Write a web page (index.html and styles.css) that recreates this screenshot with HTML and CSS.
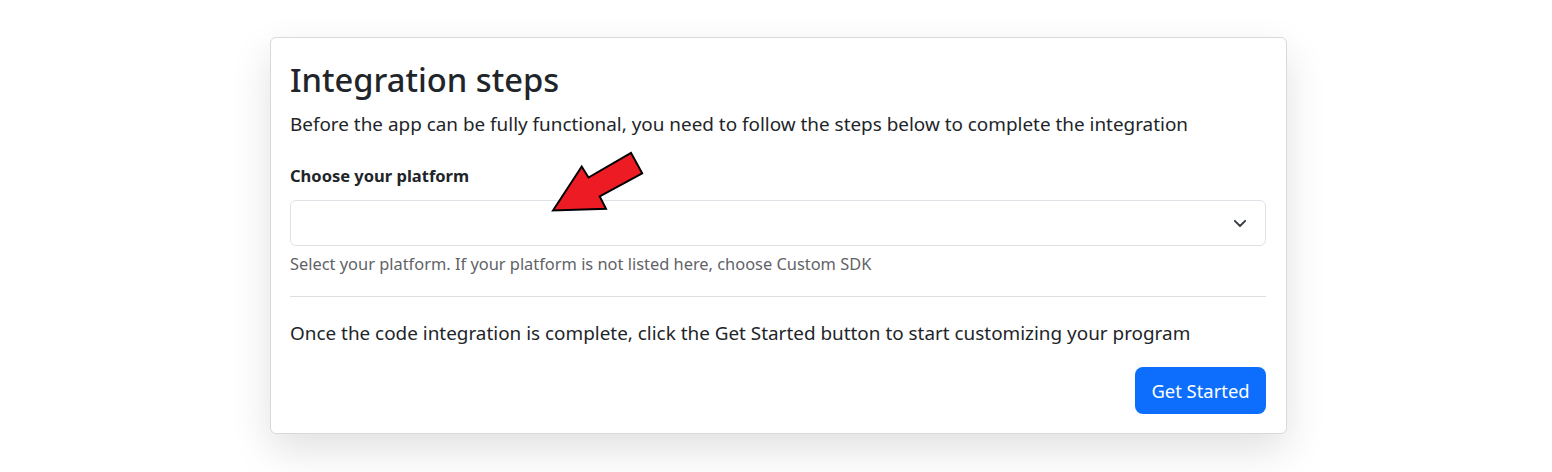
FILE: index.html
```html
<!DOCTYPE html>
<html lang="en">
<head>
<meta charset="utf-8">
<title>Integration steps</title>
<link rel="stylesheet" href="styles.css">
</head>
<body>
<main class="page">
  <section class="card">
    <h1 class="title">Integration steps</h1>
    <p class="lead">Before the app can be fully functional, you need to follow the steps below to complete the integration</p>
    <label class="label">Choose your platform</label>
    <div class="select">
      <svg class="chevron" width="12" height="7" viewBox="0 0 12 7" aria-hidden="true"><path d="M0.8 0.8 L6 6 L11.2 0.8" fill="none" stroke="#343a40" stroke-width="1.8" stroke-linecap="round" stroke-linejoin="round"/></svg>
    </div>
    <div class="help">Select your platform. If your platform is not listed here, choose Custom SDK</div>
    <hr class="divider">
    <p class="lead lead-2">Once the code integration is complete, click the Get Started button to start customizing your program</p>
    <div class="actions">
      <button class="btn" type="button">Get Started</button>
    </div>
  </section>
  <svg class="arrow" width="1552" height="472" viewBox="0 0 1552 472" aria-hidden="true">
    <polygon points="553,210.5 581.7,166.5 588.5,177.5 631,152.8 642.2,173.3 599.7,196.4 606,208.7" fill="#ed1c24" stroke="#000" stroke-width="2" stroke-linejoin="miter"/>
  </svg>
</main>
</body>
</html>
```
FILE: styles.css
```css
* { box-sizing: border-box; }

html, body {
  margin: 0;
  padding: 0;
  background: #fff;
}

body {
  font-family: "Noto Sans", "Open Sans", sans-serif;
  color: #212529;
  width: 1552px;
  height: 472px;
  overflow: hidden;
}

.page {
  position: relative;
  padding-top: 37px;
  height: 472px;
}

.card {
  width: 1017px;
  margin-left: 270px;
  border: 1px solid #d8d9da;
  border-radius: 6px;
  background: #fff;
  padding: 22px 20px 19px 19px;
  box-shadow: 0 1rem 2.5rem rgba(0, 0, 0, 0.12);
  display: flex;
  flex-direction: column;
}

.title {
  margin: 0 0 10px 0;
  font-size: 32.7px;
  line-height: 40px;
  font-weight: 500;
  color: #212529;
}

.lead {
  margin: 0;
  font-size: 18.9px;
  line-height: 28px;
  font-weight: 400;
  white-space: nowrap;
}

.label {
  margin-top: 26px;
  font-size: 16.5px;
  line-height: 24px;
  font-weight: 700;
  white-space: nowrap;
}

.select {
  margin-top: 12px;
  height: 46px;
  border: 1px solid #dee2e6;
  border-radius: 6px;
  background: #fff;
  display: flex;
  align-items: center;
  justify-content: flex-end;
  padding-right: 19px;
}

.chevron {
  display: block;
}

.help {
  margin-top: 6px;
  font-size: 16.4px;
  line-height: 24px;
  color: #5f6367;
  white-space: nowrap;
}

.divider {
  margin: 20px 0 0 0;
  border: 0;
  border-top: 1px solid #dcdee0;
  height: 0;
}

.lead-2 {
  margin-top: 22px;
}

.actions {
  margin-top: 20px;
  display: flex;
  justify-content: flex-end;
}

.btn {
  height: 47px;
  width: 131px;
  border: 0;
  border-radius: 8px;
  background: #0d6efd;
  color: #fff;
  font-family: "Noto Sans", "Open Sans", sans-serif;
  font-size: 18.4px;
  line-height: 27px;
  padding: 0;
  cursor: pointer;
}

.arrow {
  position: absolute;
  top: 0;
  left: 0;
  pointer-events: none;
}
```
